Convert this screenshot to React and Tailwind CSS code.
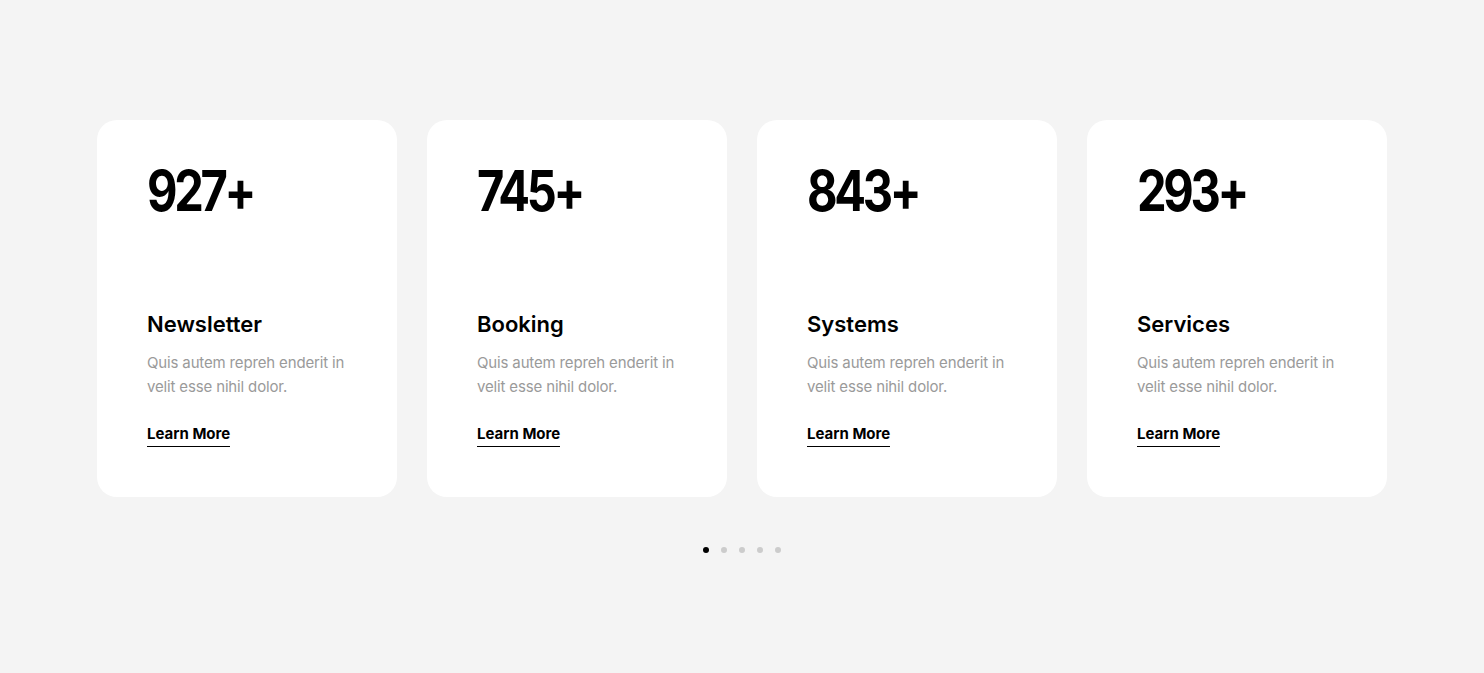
const cards = [
  { count: "927+", title: "Newsletter" },
  { count: "745+", title: "Booking" },
  { count: "843+", title: "Systems" },
  { count: "293+", title: "Services" },
];

export default function App() {
  return (
    <main
      className="min-h-screen bg-[#f4f4f4] flex flex-col items-center pt-[120px]"
      style={{ fontFamily: "Inter, 'Noto Sans', sans-serif" }}
    >
      <div className="flex gap-[30px]">
        {cards.map(({ count, title }) => (
          <div key={title} className="w-[300px] h-[377px] bg-white rounded-[20px] pl-[50px] pr-[40px] pt-[36px] flex flex-col">
            <div className="text-[56px] leading-[70px] font-bold tracking-[-4px] text-black origin-left scale-x-[0.84]">{count}</div>
            <h3 className="mt-[83px] text-[22px] leading-[30px] font-semibold text-black">{title}</h3>
            <p className="mt-[12px] text-[15px] leading-[24px] tracking-[-0.15px] text-[#9a9a9a]">
              Quis autem repreh enderit in velit esse nihil dolor.
            </p>
            <div className="mt-[22px]">
              <a href="#" className="inline-block text-[15px] leading-[20px] font-bold text-black border-b-[1.5px] border-black pb-[2px]">
                Learn More
              </a>
            </div>
          </div>
        ))}
      </div>

      <div className="flex gap-[12px] mt-[50px]">
        {[0, 1, 2, 3, 4].map((i) => (
          <span key={i} className={`w-[6px] h-[6px] rounded-full ${i === 0 ? "bg-black" : "bg-[#cccccc]"}`} />
        ))}
      </div>
    </main>
  );
}
